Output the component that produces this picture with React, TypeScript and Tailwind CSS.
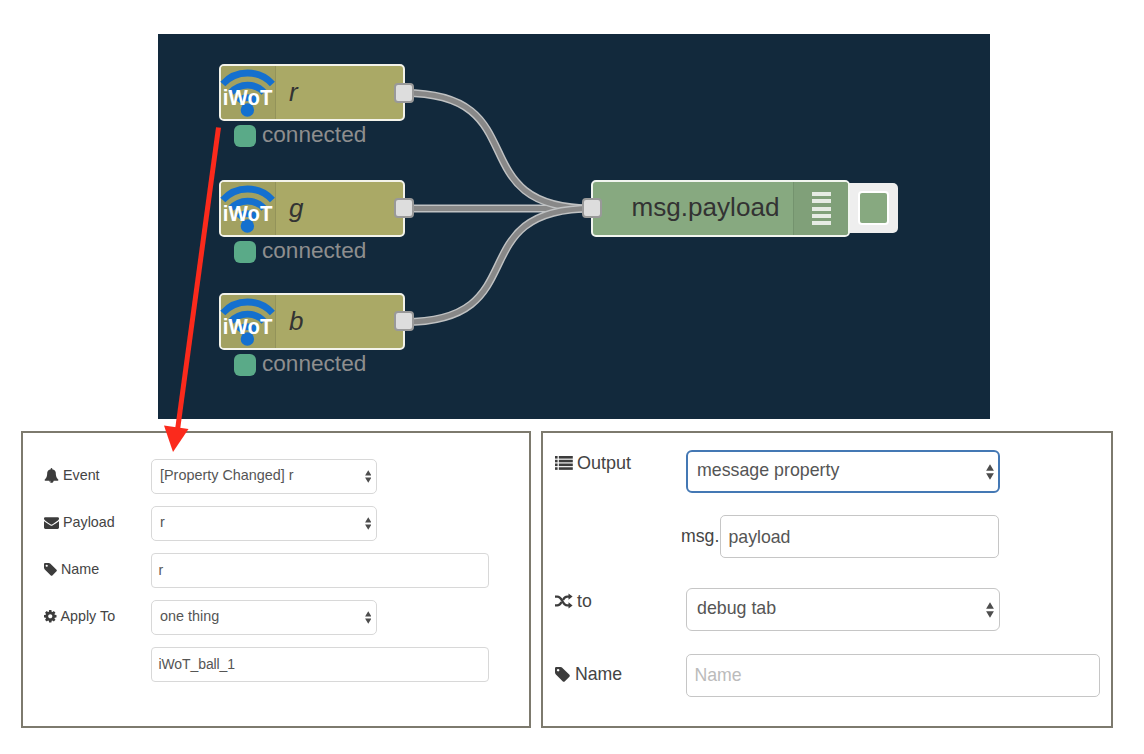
import type { ReactNode } from 'react';

const ICONS = {
  bell: 'M912 1696q0-16-16-16-59 0-101.5-42.5t-42.5-101.5q0-16-16-16t-16 16q0 73 51.5 124.5t124.5 51.5q16 0 16-16zm816-288q0 52-38 90t-90 38h-448q0 106-75 181t-181 75-181-75-75-181h-448q-52 0-90-38t-38-90q50-42 91-88t85-119.5 74.5-158.5 50-206 19.5-260q0-152 117-282.5t307-158.5q-8-19-8-39 0-40 28-68t68-28 68 28 28 68q0 20-8 39 190 28 307 158.5t117 282.5q0 139 19.5 260t50 206 74.5 158.5 85 119.5 91 88z',
  envelope:
    'M1792 710v794q0 66-47 113t-113 47h-1472q-66 0-113-47t-47-113v-794q44 49 101 87 362 246 497 345 57 42 92.5 65.5t94.5 48 110 24.5h2q51 0 110-24.5t94.5-48 92.5-65.5q170-123 498-345 57-39 100-87zm0-294q0 79-49 151t-122 123q-376 261-468 325-10 7-42.5 31t-54 38.5-52 32.5-57.5 27-50 9h-2q-23 0-50-9t-57.5-27-52-32.5-54-38.5-42.5-31q-91-64-262-182.5t-205-142.5q-62-42-117-115.5t-55-136.5q0-78 41.5-130t118.5-52h1472q65 0 112.5 47t47.5 113z',
  tag: 'M448 448q0-53-37.5-90.5t-90.5-37.5-90.5 37.5-37.5 90.5 37.5 90.5 90.5 37.5 90.5-37.5 37.5-90.5zm1067 576q0 53-37 90l-491 492q-39 37-91 37-53 0-90-37l-715-716q-38-37-64.5-101t-26.5-117v-416q0-52 38-90t90-38h416q53 0 117 26.5t102 64.5l715 714q37 39 37 91z',
  cog: 'M1152 896q0-106-75-181t-181-75-181 75-75 181 75 181 181 75 181-75 75-181zm512-109v222q0 12-8 23t-20 13l-185 28q-19 54-39 91 35 50 107 138 10 12 10 25t-9 23q-27 37-99 108t-94 71q-12 0-26-9l-138-108q-44 23-91 38-16 136-29 186-7 28-36 28h-222q-14 0-24.5-8.5t-11.5-21.5l-28-184q-49-16-90-37l-141 107q-10 9-25 9-14 0-25-11-126-114-165-168-7-10-7-23 0-12 8-23 15-21 51-66.5t54-70.5q-27-50-41-99l-183-27q-13-2-21-12.5t-8-23.5v-222q0-12 8-23t19-13l186-28q14-46 39-92-40-57-107-138-10-12-10-24 0-10 9-23 26-36 98.5-107.5t94.5-71.5q13 0 26 10l138 107q44-23 91-38 16-136 29-186 7-28 36-28h222q14 0 24.5 8.5t11.5 21.5l28 184q49 16 90 37l142-107q9-9 24-9 13 0 25 10 129 119 165 170 7 8 7 22 0 12-8 23-15 21-51 66.5t-54 70.5q26 50 41 98l183 28q13 2 21 12.5t8 23.5z',
};

function Glyph({ name, className, box = '0 0 1792 1792' }: { name: keyof typeof ICONS; className: string; box?: string }) {
  return (
    <svg viewBox={box} className={`shrink-0 fill-[#3c3c3c] ${className}`}>
      <path d={ICONS[name]} />
    </svg>
  );
}

function ListIcon() {
  return (
    <svg viewBox="0 0 18 14" className="h-[14px] w-[18px] shrink-0 fill-[#3c3c3c]">
      {[0, 3.75, 7.5, 11.25].map((y) => (
        <g key={y}>
          <rect x="0" y={y} width="2.6" height="2.6" />
          <rect x="3.8" y={y} width="14" height="2.6" />
        </g>
      ))}
    </svg>
  );
}

function ShuffleIcon() {
  return (
    <svg viewBox="0 0 18 16" className="h-[16px] w-[18px] shrink-0" fill="none" stroke="#3c3c3c" strokeWidth="2.3">
      <path d="M0 3.600h2.200C8 3.600 6.600 12.400 12.200 12.400H14.500" />
      <path d="M0 12.400h2.200c2.400 0 3.500-1.600 4.300-3.300M8 6.900c.8-1.700 1.900-3.300 4.200-3.300h2.300" />
      <path d="M13.500.4 17.600 3.600l-4.100 3.200zM13.500 9.200l4.100 3.200-4.100 3.200z" fill="#3c3c3c" stroke="none" />
    </svg>
  );
}

function Carets({ className }: { className: string }) {
  return (
    <svg viewBox="0 0 8 16" className={`shrink-0 fill-[#4d4d4d] ${className}`}>
      <path d="M4 0.300 7.900 6.700H.1zM4 15.700 7.900 9.300H.1z" />
    </svg>
  );
}

function Port({ className }: { className: string }) {
  return <div className={`absolute size-[20px] rounded-[4px] border-2 border-[#999] bg-[#ddd] ${className}`} />;
}

function IwotNode({ label, className, port }: { label: string; className: string; port: string }) {
  return (
    <div className={`absolute left-[61px] w-[186px] ${className}`}>
      <div className="flex h-[57px] items-stretch rounded-[5px] border-2 border-[#f3f3ea] bg-[#aaa966]">
        <div className="w-[55px] rounded-l-[3px] border-r border-[#93935a] bg-[#a2a161]">
          <svg viewBox="0 0 54 53" className="h-[53px] w-[54px] overflow-visible">
            <g fill="none" stroke="#1470cf" strokeWidth="6.800">
              <path d="M1.800 18A33.500 33.500 0 0 1 51.400 18" />
              <path d="M10 26.500A22 22 0 0 1 43 26.500" />
              <path d="M17.500 36A11.500 11.500 0 0 1 35.500 36" />
            </g>
            <circle cx="26.400" cy="44" r="6.700" fill="#1470cf" />
            <text transform="translate(1.800 39) scale(0.93 1)" fill="#fff" className="font-['Liberation_Sans',sans-serif] text-[22px] font-bold">
              iWoT
            </text>
          </svg>
        </div>
        <span className="pt-[9.500px] pl-[13px] text-[26px] leading-[32px] text-[#333] italic">{label}</span>
      </div>
      <div className="flex h-[30px] items-center gap-[6px] pl-[15px]">
        <span className="size-[22px] rounded-[6px] bg-[#5aaa88]" />
        <span className="pb-[2px] text-[22.600px] leading-[26px] text-[#8e8e8e]">connected</span>
      </div>
      <Port className={`left-[175px] ${port}`} />
    </div>
  );
}

function Flow() {
  const links = [
    'M246 174.500H434',
    'M246 59C380 59 300 174.500 434 174.500',
    'M246 288C380 288 300 174.500 434 174.500',
  ];
  return (
    <div className="relative h-[385px] w-[832px] bg-[#12293c]">
      <svg viewBox="0 0 832 385" className="absolute inset-0 h-[385px] w-[832px]" fill="none">
        {links.map((d) => (
          <g key={d}>
            <path d={d} stroke="#c0c2c3" strokeWidth="8" />
            <path d={d} stroke="#888" strokeWidth="5.200" />
          </g>
        ))}
      </svg>
      <IwotNode label="r" className="top-[30px]" port="top-[19px]" />
      <IwotNode label="g" className="top-[146px]" port="top-[18px]" />
      <IwotNode label="b" className="top-[259px]" port="top-[18px]" />

      <div className="absolute top-[149px] left-[687px] flex h-[50px] w-[53px] items-center justify-end rounded-[5px] bg-[#eee] pr-[9px]">
        <div className="h-[34px] w-[31px] rounded-[4px] border-2 border-white bg-[#87a980]" />
      </div>
      <div className="absolute top-[146px] left-[433px] flex h-[57px] w-[259px] overflow-hidden rounded-[5px] border-2 border-[#f1f5ef] bg-[#87a980]">
        <span className="flex-1 pt-[9px] pl-[38.500px] text-[26.100px] leading-[32px] text-[#333]">msg.payload</span>
        <div className="flex w-[55px] flex-col items-center justify-center gap-[3.400px] border-l border-[#74936e] bg-[#80a079]">
          {[0, 1, 2, 3, 4].map((i) => (
            <span key={i} className="h-[4px] w-[19px] bg-[#e6ece4]" />
          ))}
        </div>
      </div>
      <Port className="top-[164px] left-[424px]" />
    </div>
  );
}

function SmallRow({ icon, label, children }: { icon?: ReactNode; label?: string; children: ReactNode }) {
  return (
    <div className="flex h-[35px] items-center">
      <div className="flex w-[107px] items-center pb-[2px] text-[14.300px] text-[#444]">
        {icon}
        <span className="pt-[1px]">{label}</span>
      </div>
      {children}
    </div>
  );
}

function SmallSelect({ value }: { value: string }) {
  return (
    <div className="flex h-[35px] w-[226px] items-center justify-between rounded-[5px] border-[1.500px] border-[#d8d8d8] pr-[5px] pl-[8px] text-[14.400px] text-[#555]">
      <span className="pb-[1px]">{value}</span>
      <Carets className="h-[13px] w-[6.500px]" />
    </div>
  );
}

function SmallInput({ value }: { value: string }) {
  return (
    <div className="flex h-[35px] w-[338px] items-center rounded-[4px] border-[1.500px] border-[#d8d8d8] pl-[6.500px] text-[14px] tracking-[-0.100px] text-[#555]">
      <span>{value}</span>
    </div>
  );
}

function BigSelect({ value, focused = false }: { value: string; focused?: boolean }) {
  return (
    <div
      className={`flex h-[43px] w-[314px] items-center justify-between rounded-[6px] text-[17.800px] text-[#555] ${
        focused ? 'border-2 border-[#4478b4] pr-[4px] pl-[9px]' : 'border border-[#c6c6c6] pr-[5px] pl-[10px]'
      }`}
    >
      <span className="pb-[2px]">{value}</span>
      <Carets className="h-[16px] w-[8px]" />
    </div>
  );
}

export default function App() {
  return (
    <div className="relative flex h-[754px] w-[1144px] flex-col overflow-hidden bg-white pt-[34px] font-['Liberation_Sans',Arial,sans-serif]">
      <div className="pl-[158px]">
        <Flow />
      </div>

      <div className="flex gap-[10px] pt-[12px] pl-[21px]">
        <section className="flex h-[297px] w-[510px] flex-col gap-[12px] border-2 border-[#7d7a6e] pt-[26px] pl-[21px]">
          <SmallRow icon={<Glyph name="bell" className="mr-[4px] size-[15px]" />} label="Event">
            <SmallSelect value="[Property Changed] r" />
          </SmallRow>
          <SmallRow icon={<Glyph name="envelope" className="mr-[4px] size-[15px]" />} label="Payload">
            <SmallSelect value="r" />
          </SmallRow>
          <SmallRow icon={<Glyph name="tag" box="0 128 1536 1536" className="mr-[4px] size-[13px]" />} label="Name">
            <SmallInput value="r" />
          </SmallRow>
          <SmallRow icon={<Glyph name="cog" box="128 128 1536 1536" className="mr-[4px] size-[12.500px]" />} label="Apply To">
            <SmallSelect value="one thing" />
          </SmallRow>
          <SmallRow>
            <SmallInput value="iWoT_ball_1" />
          </SmallRow>
        </section>

        <section className="flex h-[297px] w-[572px] flex-col border-2 border-[#7d7a6e] pt-[17px] pl-[12px] text-[17.700px] text-[#444]">
          <div className="flex">
            <div className="flex h-[26px] w-[131px] items-center gap-[4px] text-[18px]">
              <ListIcon />
              <span>Output</span>
            </div>
            <BigSelect value="message property" focused />
          </div>
          <div className="mt-[22px] flex items-center gap-[1px] pl-[126px]">
            <span className="w-[38px]">msg.</span>
            <div className="flex h-[43px] w-[279px] items-center rounded-[5px] border border-[#c6c6c6] pt-[1px] pl-[7.500px] text-[#555]">payload</div>
          </div>
          <div className="mt-[30px] flex">
            <div className="flex h-[26px] w-[131px] items-center gap-[4px]">
              <ShuffleIcon />
              <span>to</span>
            </div>
            <BigSelect value="debug tab" />
          </div>
          <div className="mt-[23px] flex">
            <div className="flex h-[40px] w-[131px] items-center gap-[5px]">
              <Glyph name="tag" box="0 128 1536 1536" className="size-[15px]" />
              <span>Name</span>
            </div>
            <div className="flex h-[43px] w-[414px] items-center rounded-[5px] border border-[#c6c6c6] pl-[7.500px] text-[#bbb]">Name</div>
          </div>
        </section>
      </div>

      <svg viewBox="0 0 1144 754" className="pointer-events-none absolute inset-0 h-[754px] w-[1144px]">
        <path d="M218.500 127.500 177.500 430" stroke="#fb2a1c" strokeWidth="5" />
        <path d="M164 425.500 188.500 429 173 452z" fill="#fb2a1c" />
      </svg>
    </div>
  );
}
